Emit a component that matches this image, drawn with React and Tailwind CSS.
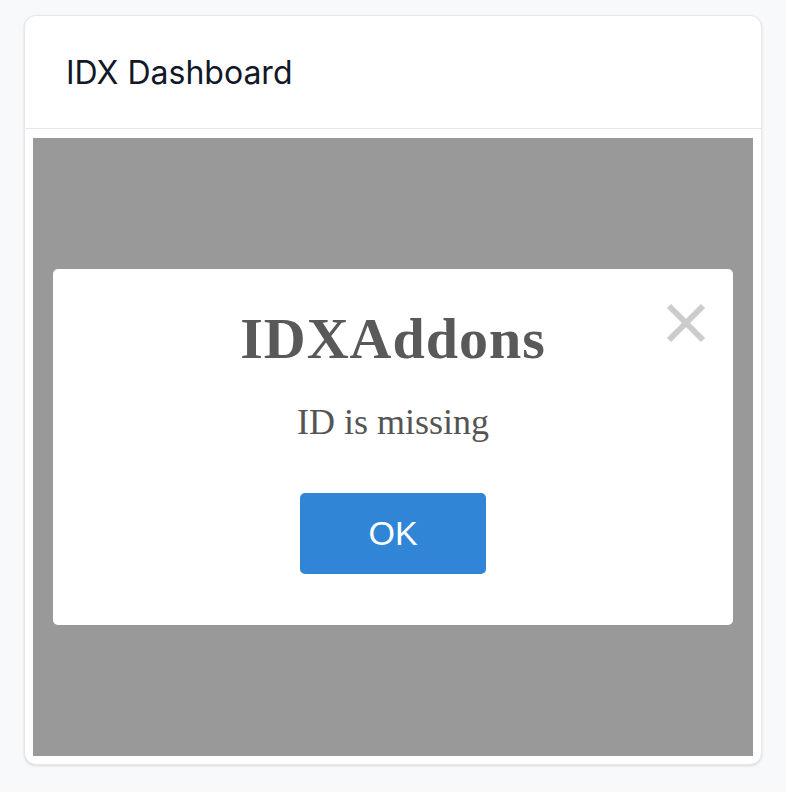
export default function App() {
  return (
    <div className="min-h-screen bg-[#f8f9fb] px-6 pt-[15px] pb-[27px]">
      <div className="rounded-xl border border-[#e5e7eb] bg-white shadow-sm">
        <header className="border-b border-[#e5e7eb] pl-[41px] pt-[37px] pb-[35px]">
          <h1 className="font-['Inter',sans-serif] text-[32px] leading-[40px] text-[#111827]">IDX Dashboard</h1>
        </header>
        <div className="pt-[9px] px-2 pb-2">
          <div className="flex h-[618px] items-center justify-center bg-[#999999]">
            <div className="relative flex w-[680px] flex-col items-center rounded-[5px] bg-white pt-[38px] pb-[51px]">
              <button className="absolute right-[27px] top-[34px] h-10 w-10" aria-label="Close">
                <svg viewBox="0 0 40 40" className="h-10 w-10">
                  <path d="M3 3 L37 37 M37 3 L3 37" stroke="#cccccc" strokeWidth="6" />
                </svg>
              </button>
              <h2 className="font-['Liberation_Serif',serif] text-[58px] font-bold leading-[64px] tracking-[1px] text-[#595959]">IDXAddons</h2>
              <p className="mt-[31px] font-['Liberation_Serif',serif] text-[36px] leading-[40px] text-[#545454]">ID is missing</p>
              <button className="mt-[51px] h-[81px] w-[186px] rounded-[5px] bg-[#3085d6] font-['Liberation_Sans',sans-serif] text-[34px] text-white">
                OK
              </button>
            </div>
          </div>
        </div>
      </div>
    </div>
  );
}
